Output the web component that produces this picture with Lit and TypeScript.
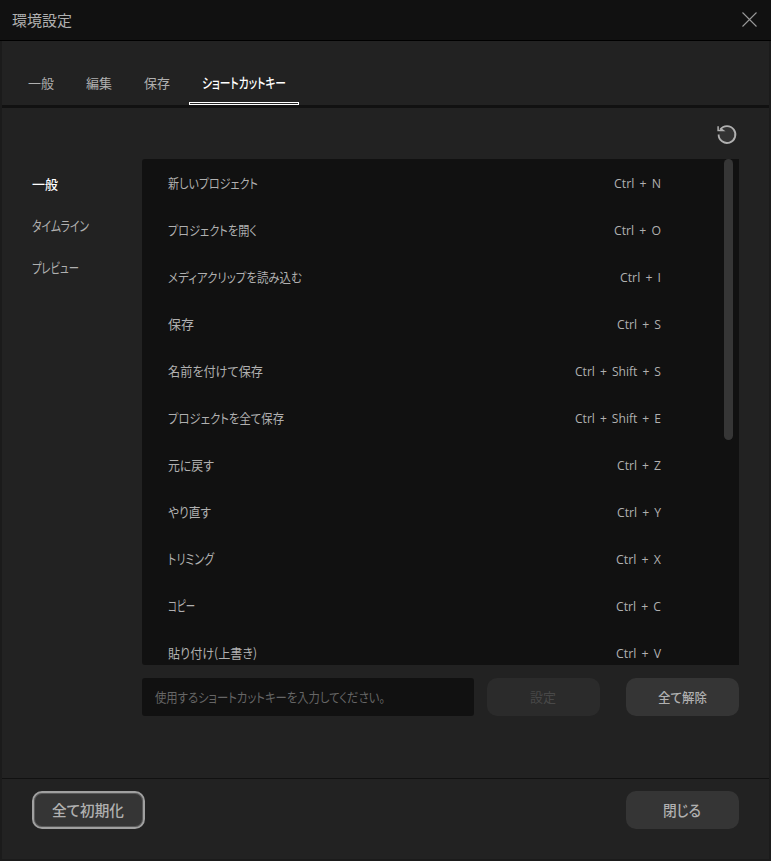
import { LitElement, html, css } from "lit";
import { customElement, property } from "lit/decorators.js";

/** A label whose glyphs are set to an exact width. */
@customElement("fit-text")
export class FitText extends LitElement {
  @property({ type: Number }) width = 0;
  @property() text = "";
  static styles = css`
    :host { display: inline-block; line-height: 0; }
    svg { display: block; height: 20px; overflow: visible; }
    text { fill: currentColor; font-feature-settings: "palt"; }
    .kana { font-size: 14px; }
  `;
  render() {
    const kana = /^[\u3040-\u30ff]+$/.test(this.text);
    return html`<svg width=${this.width} height="20"><text class=${kana ? "kana" : ""} x="0" y="15" textLength=${this.width} lengthAdjust="spacingAndGlyphs">${this.text}</text></svg>`;
  }
}

type Label = [string, number];
const label = ([text, width]: Label) => html`<fit-text .text=${text} .width=${width}></fit-text>`;

const TABS: Label[] = [["一般", 26], ["編集", 26], ["保存", 26], ["ショートカットキー", 84]];
const GROUPS: Label[] = [["一般", 26], ["タイムライン", 57], ["プレビュー", 47]];
const SHORTCUTS: [Label, Label][] = [
  [["新しいプロジェクト", 90], ["Ctrl + N", 47]],
  [["プロジェクトを開く", 89], ["Ctrl + O", 47]],
  [["メディアクリップを読み込む", 134], ["Ctrl + I", 41]],
  [["保存", 26], ["Ctrl + S", 44]],
  [["名前を付けて保存", 95], ["Ctrl + Shift + S", 86]],
  [["プロジェクトを全て保存", 116], ["Ctrl + Shift + E", 86]],
  [["元に戻す", 46], ["Ctrl + Z", 44]],
  [["やり直す", 43], ["Ctrl + Y", 44]],
  [["トリミング", 46], ["Ctrl + X", 45]],
  [["コピー", 27], ["Ctrl + C", 45]],
  [["貼り付け(上書き)", 89], ["Ctrl + V", 45]],
];

@customElement("app-root")
export class AppRoot extends LitElement {
  static styles = css`
    :host {
      display: flex; flex-direction: column; box-sizing: border-box;
      width: 771px; height: 861px; overflow: hidden;
      background: #1b1b1b; color: #b0b0b0;
      font: 13px "Noto Sans CJK JP", sans-serif;
    }
    *, *::after { box-sizing: border-box; }
    header {
      display: flex; justify-content: space-between; align-items: center;
      height: 41px; padding: 0 13px 1px 12px; flex: none;
      background: #111; border-bottom: 1px solid #000; font-size: 15px;
    }
    header fit-text { padding-top: 2px; }
    svg { display: block; }
    .body { flex: 1; display: flex; flex-direction: column; margin: 0 2px 2px; background: #222; }
    nav { display: flex; height: 67px; padding: 23px 0 0 13px; gap: 6px; border-bottom: 3px solid #111; }
    .tab { display: flex; align-items: center; height: 41px; padding: 0 13px 3px; }
    .tab.on { color: #fff; font-weight: 500; position: relative; }
    .tab.on::after {
      content: ""; position: absolute; left: 0; right: 0; bottom: 0;
      height: 3px; border: 1px solid #fff;
    }
    .tools { display: flex; justify-content: flex-end; height: 51px; padding: 16px 31px 0 0; }
    .main { display: flex; height: 506px; }
    .side { width: 140px; padding: 4px 0 0 30px; }
    .group { display: flex; align-items: center; height: 42px; padding-bottom: 1px; }
    .group.on { color: #fff; font-weight: 500; }
    .list { display: flex; width: 597px; overflow: hidden; background: #111; border-radius: 3px 0 0 3px; }
    .rows { width: 519px; padding: 0 0 0 26px; }
    .row { display: flex; justify-content: space-between; align-items: center; height: 47px; }
    .keys { display: flex; padding-top: 1px; font-family: "Open Sans", "Noto Sans", sans-serif; font-size: 12.5px; word-spacing: 2px; }
    .thumb { width: 9px; height: 281px; margin-left: 63px; border-radius: 4.5px; background: #363636; }
    .assign { display: flex; padding: 13px 0 0 140px; }
    .field {
      display: flex; align-items: center; width: 332px; height: 38px; padding: 0 0 1px 13px;
      margin-right: 13px; border-radius: 3px; background: #111; color: #666;
    }
    .btn {
      display: flex; align-items: center; justify-content: center;
      width: 113px; height: 38px; padding: 0 1px 1px 0; border-radius: 10px; background: #353535; font-weight: 500;
    }
    .btn.off { background: #2b2b2b; color: #484848; margin-right: 26px; font-weight: 400; }
    .btn.focus { border: 2px solid #a0a0a0; box-shadow: inset 0 0 0 1px #5a5a5a; }
    footer {
      display: flex; justify-content: space-between; height: 81px; margin-top: auto;
      padding: 12px 30px 0; border-top: 1px solid #111; font-size: 15px;
    }
    footer .btn { padding: 1px 1px 0 0; }
  `;
  render() {
    return html`
      <header>
        ${label(["環境設定", 60])}
        <svg width="17" height="17" viewBox="0 0 17 17" fill="none" stroke="#999" stroke-width="1.1"><path d="M1.5 1.5l14 14M15.5 1.5l-14 14" /></svg>
      </header>
      <div class="body">
        <nav>${TABS.map((t, i) => html`<div class="tab ${i === 3 ? "on" : ""}">${label(t)}</div>`)}</nav>
        <div class="tools">
          <svg width="22" height="22" viewBox="0 0 22 22" fill="none" stroke="#b0b0b0" stroke-width="1.8">
            <circle cx="11" cy="10.5" r="8" fill="#333" stroke="none" />
            <path d="M4.2 5.6A8.4 8.4 0 1 1 2.6 10.5" />
            <path d="M2.1 2.2V6.5H7.2L4.6 4.6" stroke-width="1.5" />
          </svg>
        </div>
        <div class="main">
          <div class="side">${GROUPS.map((g, i) => html`<div class="group ${i === 0 ? "on" : ""}">${label(g)}</div>`)}</div>
          <div class="list">
            <div class="rows">
              ${SHORTCUTS.map(([name, keys]) => html`<div class="row">${label(name)}<span class="keys">${label(keys)}</span></div>`)}
            </div>
            <div class="thumb"></div>
          </div>
        </div>
        <div class="assign">
          <div class="field">${label(["使用するショートカットキーを入力してください。", 230])}</div>
          <div class="btn off">${label(["設定", 26])}</div>
          <div class="btn">${label(["全て解除", 49])}</div>
        </div>
        <footer>
          <div class="btn focus">${label(["全て初期化", 72])}</div>
          <div class="btn">${label(["閉じる", 38])}</div>
        </footer>
      </div>
    `;
  }
}
